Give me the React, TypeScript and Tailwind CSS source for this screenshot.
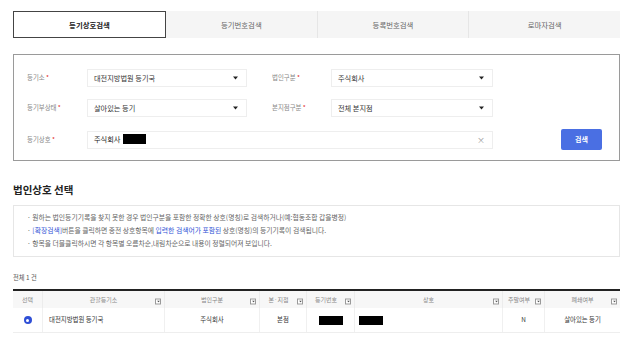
import React from 'react';

const FONT = { fontFamily: '"Noto Sans CJK KR", "Noto Sans", sans-serif' };

function Caret() {
  return (
    <svg width="5" height="4" viewBox="0 0 5 4" className="shrink-0">
      <path d="M0 0.5 L5 0.5 L2.5 3.5 Z" fill="#222" />
    </svg>
  );
}

function FilterIcon() {
  return (
    <span className="inline-flex w-[6px] h-[6px] border border-[#9a9a9a] bg-white items-center justify-center shrink-0">
      <svg width="3" height="2" viewBox="0 0 3 2">
        <path d="M0 0 L3 0 L1.5 2 Z" fill="#555" />
      </svg>
    </span>
  );
}

function Label({ text, width }: { text: string; width: string }) {
  return (
    <div className={`${width} shrink-0 text-[6.4px] text-[#888]`}>
      {text} <span className="text-[#e02020]">*</span>
    </div>
  );
}

function Select({ value, width }: { value: string; width: string }) {
  return (
    <div className={`${width} h-[18px] shrink-0 border border-[#eeeeee] bg-white flex items-center justify-between pl-[6px] pr-[8px] text-[7.2px] text-[#333]`}>
      <span>{value}</span>
      <Caret />
    </div>
  );
}

const tabs = ['등기상호검색', '등기번호검색', '등록번호검색', '로마자검색'];

const columns = [
  { name: '선택', w: 'w-[30px]', filter: false, shift: false },
  { name: '관할등기소', w: 'w-[122px]', filter: true, shift: false },
  { name: '법인구분', w: 'w-[95px]', filter: true, shift: false },
  { name: '본·지점', w: 'w-[47px]', filter: true, shift: true },
  { name: '등기번호', w: 'w-[48px]', filter: true, shift: true },
  { name: '상호', w: 'w-[148px]', filter: true, shift: false },
  { name: '주말여부', w: 'w-[42px]', filter: true, shift: true },
  { name: '폐쇄여부', w: 'w-[75px]', filter: true, shift: false },
];

export default function App() {
  return (
    <div className="w-[638px] h-[340px] overflow-hidden bg-white pl-[13px] pt-[11px]" style={FONT}>
      {/* Tabs */}
      <div className="flex w-[607px] h-[27px] bg-[#f5f5f5]">
        {tabs.map((t, i) => (
          <div
            key={t}
            className={
              i === 0
                ? 'w-[153px] border border-[#444] bg-white flex items-center justify-center text-[7.4px] font-bold text-[#222]'
                : `flex-1 flex items-center justify-center text-[7.4px] text-[#666] ${i < 3 ? 'border-r border-[#e6e6e6]' : ''}`
            }
          >
            {t}
          </div>
        ))}
      </div>

      {/* Search form */}
      <div className="mt-[16px] w-[607px] h-[107px] border border-[#9a9a9a] pl-[13px] pt-[14px] flex flex-col gap-[12px]">
        <div className="flex items-center">
          <Label text="등기소" width="w-[60px]" />
          <Select value="대전지방법원 등기국" width="w-[160px]" />
          <div className="w-[25px] shrink-0" />
          <Label text="법인구분" width="w-[59px]" />
          <Select value="주식회사" width="w-[162px]" />
        </div>
        <div className="flex items-center">
          <Label text="등기부상태" width="w-[60px]" />
          <Select value="살아있는 등기" width="w-[160px]" />
          <div className="w-[25px] shrink-0" />
          <Label text="본지점구분" width="w-[59px]" />
          <Select value="전체 본지점" width="w-[162px]" />
        </div>
        <div className="flex items-center">
          <Label text="등기상호" width="w-[60px]" />
          <div className="w-[406px] h-[18px] shrink-0 border border-[#eeeeee] bg-white flex items-center justify-between pl-[6px] pr-[7px] text-[7.2px] text-[#222]">
            <span className="flex items-center gap-[3px]">
              주식회사
              <span className="inline-block w-[23px] h-[10px] bg-black" />
            </span>
            <span className="text-[8px] text-[#999]">×</span>
          </div>
          <button className="ml-[68px] w-[41px] h-[21px] rounded-[2px] bg-[#4a6fe3] text-white text-[7px] font-bold flex items-center justify-center">
            검색
          </button>
        </div>
      </div>

      {/* Title */}
      <h2 className="mt-[22px] leading-[14px] text-[10.5px] font-bold text-[#222]">법인상호 선택</h2>

      {/* Notice */}
      <div className="mt-[8px] w-[607px] h-[52px] border border-[#e6e6e6] pl-[13px] pt-[5px] text-[6.8px] leading-[13px] text-[#666]">
        <p>· 원하는 법인등기기록을 찾지 못한 경우 법인구분을 포함한 정확한 상호(명칭)로 검색하거나(예:협동조합 갑을병정)</p>
        <p>
          · <span className="text-[#2f53d6]">[확장검색]</span>버튼을 클릭하면 종전 상호항목에{' '}
          <span className="text-[#2f53d6]">입력한 검색어가 포함된</span> 상호(명칭)의 등기기록이 검색됩니다.
        </p>
        <p>· 항목을 더블클릭하시면 각 항목별 오름차순,내림차순으로 내용이 정렬되어져 보입니다.</p>
      </div>

      {/* Count */}
      <div className="mt-[15px] leading-[12px] text-[6.3px] text-[#555]">전체 1 건</div>

      {/* Result table */}
      <div className="mt-[5px] w-[607px] border-t-2 border-[#222]">
        <div className="flex h-[17px] bg-[#f7f7f7]">
          {columns.map((c, i) => (
            <div
              key={c.name}
              className={`${c.w} shrink-0 relative flex items-center justify-center text-[6px] text-[#888] ${i < columns.length - 1 ? 'border-r border-[#ececec]' : ''}`}
            >
              <span className={c.shift ? 'mr-[9px]' : ''}>{c.name}</span>
              {c.filter && (
                <span className="absolute right-[3px] top-1/2 -translate-y-1/2">
                  <FilterIcon />
                </span>
              )}
            </div>
          ))}
        </div>
        <div className="flex h-[25px] border-b border-[#eeeeee] text-[6.4px] text-[#333]">
          <div className="w-[30px] shrink-0 flex items-center justify-center border-r border-[#f0f0f0]">
            <span className="w-[8px] h-[8px] rounded-full bg-[#2f4fd6] flex items-center justify-center">
              <span className="w-[3px] h-[3px] rounded-full bg-white" />
            </span>
          </div>
          <div className="w-[122px] shrink-0 flex items-center pl-[6px] border-r border-[#f0f0f0]">대전지방법원 등기국</div>
          <div className="w-[95px] shrink-0 flex items-center justify-center border-r border-[#f0f0f0]">주식회사</div>
          <div className="w-[47px] shrink-0 flex items-center justify-center border-r border-[#f0f0f0]">본점</div>
          <div className="w-[48px] shrink-0 flex items-center justify-center border-r border-[#f0f0f0]">
            <span className="w-[24px] h-[9px] bg-black" />
          </div>
          <div className="w-[148px] shrink-0 flex items-center pl-[4px] border-r border-[#f0f0f0]">
            <span className="w-[24px] h-[9px] bg-black" />
          </div>
          <div className="w-[42px] shrink-0 flex items-center justify-center border-r border-[#f0f0f0]">N</div>
          <div className="w-[75px] shrink-0 flex items-center justify-center">살아있는 등기</div>
        </div>
      </div>
    </div>
  );
}
